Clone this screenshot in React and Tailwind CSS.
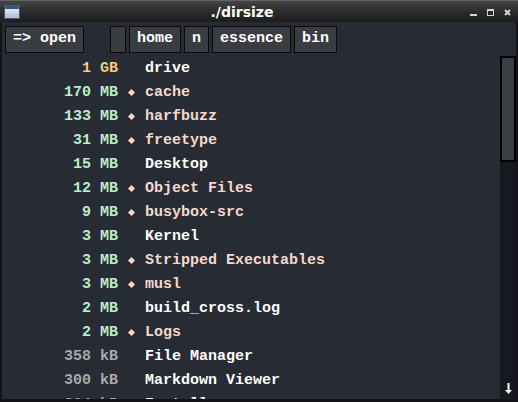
import React from 'react';

const rows = [
  { size: '1', unit: 'GB', name: 'drive' },
  { size: '170', unit: 'MB', name: 'cache', dir: true },
  { size: '133', unit: 'MB', name: 'harfbuzz', dir: true },
  { size: '31', unit: 'MB', name: 'freetype', dir: true },
  { size: '15', unit: 'MB', name: 'Desktop' },
  { size: '12', unit: 'MB', name: 'Object Files', dir: true },
  { size: '9', unit: 'MB', name: 'busybox-src', dir: true },
  { size: '3', unit: 'MB', name: 'Kernel' },
  { size: '3', unit: 'MB', name: 'Stripped Executables', dir: true },
  { size: '3', unit: 'MB', name: 'musl', dir: true },
  { size: '2', unit: 'MB', name: 'build_cross.log' },
  { size: '2', unit: 'MB', name: 'Logs', dir: true },
  { size: '358', unit: 'kB', name: 'File Manager' },
  { size: '300', unit: 'kB', name: 'Markdown Viewer' },
  { size: '304', unit: 'kB', name: 'Installer' },
];

const unitColor = {
  GB: 'text-[#f6c87f]',
  MB: 'text-[#b6efc7]',
  kB: 'text-[#a9a9a9]',
};

const WindowIcon = () => (
  <svg width="16" height="14" viewBox="0 0 16 14">
    <defs>
      <linearGradient id="body" x1="0" y1="0" x2="0" y2="1">
        <stop offset="0" stopColor="#f4f7fb" />
        <stop offset="1" stopColor="#aebbcc" />
      </linearGradient>
    </defs>
    <rect x="0.5" y="0.5" width="15" height="13" fill="url(#body)" stroke="#4b5a70" />
    <rect x="1" y="1" width="14" height="3" fill="#35527e" />
  </svg>
);

const ToolButton = ({ children, className = '' }) => (
  <div className={`h-[27px] px-[7px] flex items-center bg-[#393d41] border border-[#0b0b0b] text-white ${className}`}>
    {children}
  </div>
);

const App = () => {
  return (
    <div
      className="w-[518px] h-[402px] flex flex-col bg-[#121418] overflow-hidden select-none"
      style={{ fontFamily: '"Liberation Mono", "DejaVu Sans Mono", monospace' }}
    >
      {/* Title bar */}
      <div className="relative h-[22px] flex items-center border-t border-[#636363] bg-gradient-to-b from-[#444444] via-[#2c2c2c] to-[#1c1c1c]">
        <div className="ml-[4px]">
          <WindowIcon />
        </div>
        <div
          className="flex-1 text-center text-white font-bold text-[14px] leading-none -ml-[20px] pr-[34px]"
          style={{ fontFamily: '"DejaVu Sans", sans-serif' }}
        >
          ./dirsize
        </div>
        <div className="absolute right-[7px] top-[8px] flex items-start gap-[10px]">
          <div className="w-[7px] h-[7px] flex items-end">
            <div className="w-[7px] h-[2px] bg-[#d6d6d6]" />
          </div>
          <div className="w-[7px] h-[7px] border border-t-2 border-[#d6d6d6]" />
          <svg width="7" height="7" viewBox="0 0 7 7">
            <path d="M1 1 L6 6 M6 1 L1 6" stroke="#d6d6d6" strokeWidth="2" />
          </svg>
        </div>
      </div>

      {/* Body */}
      <div className="flex-1 min-h-0 flex flex-col ml-[2px] mr-[2px] mb-[3px] bg-[#272b33] font-bold text-[15px]">
        {/* Toolbar */}
        <div className="h-[34px] flex items-start pt-[4px] pl-[3px]">
          <ToolButton>=&gt; open</ToolButton>
          <ToolButton className="ml-[26px] w-[16px] px-0" />
          <ToolButton className="ml-[3px]">home</ToolButton>
          <ToolButton className="ml-[3px]">n</ToolButton>
          <ToolButton className="ml-[3px]">essence</ToolButton>
          <ToolButton className="ml-[3px]">bin</ToolButton>
        </div>

        <div className="flex-1 min-h-0 flex">
          {/* List */}
          <div className="flex-1 overflow-hidden pt-[1px]">
            {rows.map((row, i) => (
              <div key={i} className="h-[24px] leading-[24px] flex items-center whitespace-pre">
                <span className={`w-[89px] text-right ${unitColor[row.unit]}`}>{row.size}</span>
                <span className={`ml-[9px] w-[18px] ${unitColor[row.unit]}`}>{row.unit}</span>
                <span className="ml-[9px] w-[9px] flex justify-center -mt-[2px]">
                  {row.dir && <span className="w-[5px] h-[5px] rotate-45 bg-[#f6d8ca]" />}
                </span>
                <span className={`ml-[9px] ${row.dir ? 'text-[#f6d8ca]' : 'text-white'}`}>{row.name}</span>
              </div>
            ))}
          </div>

          {/* Scrollbar */}
          <div className="w-[16px] flex flex-col bg-[#161920]">
            <div className="h-[106px] bg-[#3a3e42] border-2 border-black" />
            <div className="flex-1" />
            <div className="h-[16px] flex justify-center items-start pb-[4px]">
              <svg width="7" height="12" viewBox="0 0 7 12">
                <rect x="2.5" y="0" width="2" height="8" fill="#ffffff" />
                <polygon points="0,7 7,7 3.5,11" fill="#ffffff" />
              </svg>
            </div>
          </div>
        </div>
      </div>
    </div>
  );
};

export default App;
